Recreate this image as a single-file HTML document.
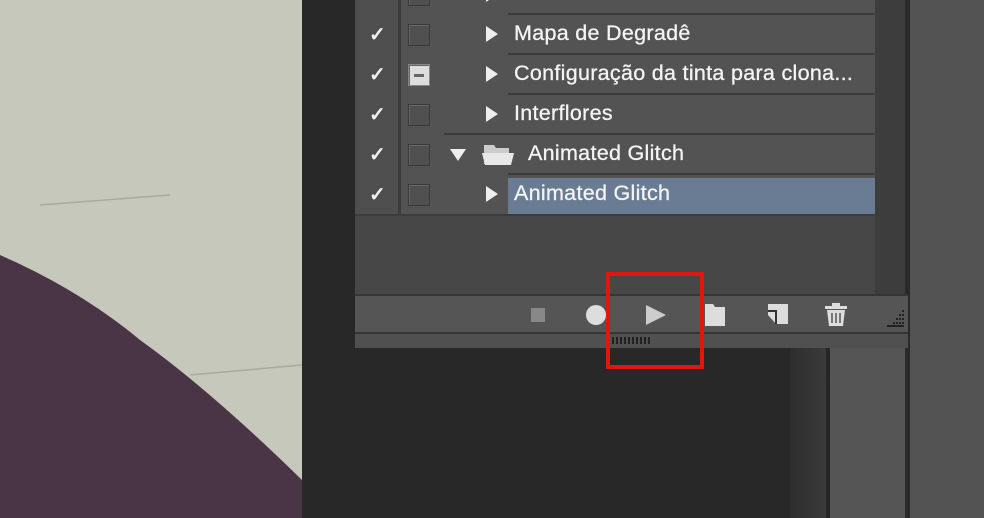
<!DOCTYPE html>
<html><head><meta charset="utf-8"><style>
*{margin:0;padding:0;box-sizing:border-box}
body{width:984px;height:518px;overflow:hidden;background:#282828;position:relative;font-family:"Liberation Sans",sans-serif}
.a{position:absolute}
.row{position:absolute;left:355px;width:520px;height:40px}
.chk{position:absolute;left:14px;top:8px;color:#eee;font-size:20px;font-weight:bold}
.box{position:absolute;left:53px;top:10px;width:22px;height:22px;border:1px solid #3a3a3a;box-shadow:inset 1px 1px 0 #666;background:#505050}
.tri{position:absolute;left:131px;top:12px;width:0;height:0;border-left:12px solid #eee;border-top:8px solid transparent;border-bottom:8px solid transparent}
.lbl{position:absolute;left:159px;top:7px;color:#f4f4f4;font-size:21.5px;white-space:nowrap;letter-spacing:0.3px;-webkit-text-stroke:0.3px #f4f4f4}
.sep{position:absolute;left:508px;width:367px;height:2px;background:#3c3c3c}
</style></head><body>
<svg class="a" style="left:0;top:0" width="302" height="518">
<rect width="302" height="518" fill="#c6c8bb"/>
<path d="M0 255 Q80 290 140 340 Q210 390 302 480 L302 518 L0 518Z" fill="#4a3546"/>
<path d="M40 205 L170 195" stroke="#a9aa9e" stroke-width="1.5" fill="none"/>
<path d="M190 375 L302 365" stroke="#a9aa9e" stroke-width="1.5" fill="none"/>
</svg>
<div class="a" style="left:302px;top:0;width:53px;height:518px;background:#282828"></div>
<div class="a" style="left:790px;top:348px;width:36px;height:170px;background:linear-gradient(90deg,#2e2e2e,#3a3a3a)"></div>
<div class="a" style="left:826px;top:348px;width:4px;height:170px;background:#262626"></div>
<div class="a" style="left:830px;top:348px;width:75px;height:170px;background:#555"></div>
<div class="a" style="left:905px;top:0;width:5px;height:518px;background:#2a2a2a"></div>
<div class="a" style="left:910px;top:0;width:74px;height:518px;background:#535353"></div>
<!-- panel -->
<div class="a" style="left:355px;top:0;width:520px;height:296px;background:#474747"></div>
<div class="a" style="left:355px;top:0;width:43px;height:215px;background:#4e4e4e"></div>
<div class="a" style="left:398px;top:0;width:3px;height:215px;background:#3c3c3c"></div>
<div class="a" style="left:401px;top:0;width:474px;height:215px;background:#535353"></div>
<div class="a" style="left:875px;top:0;width:30px;height:296px;background:#3d3d3d"></div>
<div class="sep" style="top:13px"></div><div class="sep" style="top:53px"></div><div class="sep" style="top:93px"></div>
<div class="sep" style="top:133px;left:444px;width:431px"></div><div class="sep" style="top:173px"></div>
<div class="a" style="left:355px;top:214px;width:520px;height:2px;background:#3c3c3c"></div>
<div class="row" style="top:-26px"><span class="chk">✓</span><div class="box"></div><div class="tri"></div></div>
<div class="row" style="top:14px"><span class="chk">✓</span><div class="box"></div><div class="tri"></div><span class="lbl">Mapa de Degradê</span></div>
<div class="row" style="top:54px"><span class="chk">✓</span><div class="box" style="background:#ddd;border-color:#888"><div style="position:absolute;left:5px;top:9px;width:10px;height:3px;background:#666"></div></div><div class="tri"></div><span class="lbl">Configuração da tinta para clona...</span></div>
<div class="row" style="top:94px"><span class="chk">✓</span><div class="box"></div><div class="tri"></div><span class="lbl">Interflores</span></div>
<div class="row" style="top:134px"><span class="chk">✓</span><div class="box"></div>
<div style="position:absolute;left:95px;top:15px;border-top:12px solid #eee;border-left:8px solid transparent;border-right:8px solid transparent"></div>
<svg style="position:absolute;left:125px;top:8px" width="36" height="24"><path d="M4 3h10l2 3h13v16H4z" fill="#ccc"/><path d="M2 11h32l-3 12H5z" fill="#e8e8e8"/></svg>
<span class="lbl" style="left:173px">Animated Glitch</span></div>
<div class="a" style="left:508px;top:178px;width:367px;height:36px;background:#6a7c94"></div>
<div class="row" style="top:174px"><span class="chk">✓</span><div class="box"></div><div class="tri"></div><span class="lbl">Animated Glitch</span></div>
<!-- footer -->
<div class="a" style="left:355px;top:294px;width:553px;height:2px;background:#363636"></div>
<div class="a" style="left:355px;top:296px;width:553px;height:36px;background:#555"></div>
<div class="a" style="left:355px;top:332px;width:553px;height:2px;background:#353535"></div>
<div class="a" style="left:355px;top:334px;width:553px;height:14px;background:#505050"></div>
<div class="a" style="left:612px;top:337px;width:38px;height:7px;background:repeating-linear-gradient(90deg,#222 0 2px,transparent 2px 4px)"></div>
<div class="a" style="left:531px;top:308px;width:14px;height:14px;background:#888"></div>
<div class="a" style="left:586px;top:305px;width:20px;height:20px;border-radius:50%;background:#ddd"></div>
<div class="a" style="left:646px;top:305px;border-left:20px solid #ccc;border-top:10px solid transparent;border-bottom:10px solid transparent"></div>
<svg class="a" style="left:703px;top:302px" width="24" height="24"><path d="M2 2h8l2 3h10v19H2z" fill="#ddd"/></svg>
<svg class="a" style="left:764px;top:302px" width="26" height="24"><path d="M4 2h20v20H12L4 13z" fill="#ddd"/><path d="M4 9h8v13" fill="none" stroke="#333" stroke-width="2"/></svg>
<svg class="a" style="left:822px;top:302px" width="28" height="26"><path d="M10 1h8v3h-8z M3 4h22v3H3z" fill="#ddd"/><path d="M5 8h18l-2 16H7z" fill="#ddd"/><path d="M10 11v10M14 11v10M18 11v10" stroke="#555" stroke-width="1.5"/></svg>
<svg class="a" style="left:884px;top:308px" width="22" height="20"><g fill="#222"><rect x="18" y="2" width="2" height="2"/><rect x="15" y="6" width="2" height="2"/><rect x="18" y="6" width="2" height="2"/><rect x="12" y="10" width="2" height="2"/><rect x="15" y="10" width="2" height="2"/><rect x="18" y="10" width="2" height="2"/><rect x="9" y="14" width="2" height="2"/><rect x="12" y="14" width="2" height="2"/><rect x="15" y="14" width="2" height="2"/><rect x="18" y="14" width="2" height="2"/><rect x="3" y="17" width="17" height="2"/></g></svg>
<div class="a" style="left:606px;top:272px;width:98px;height:97px;border:4px solid #e0170f"></div>
</body></html>
